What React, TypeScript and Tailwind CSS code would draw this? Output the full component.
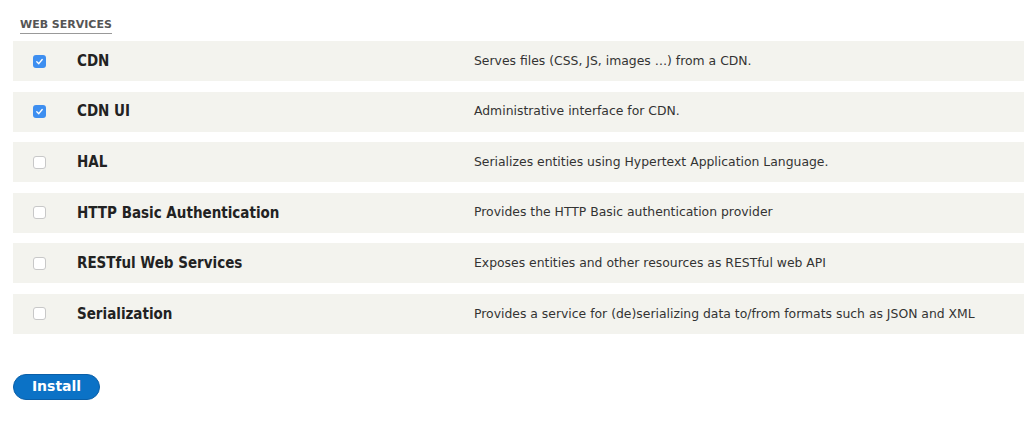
import React from "react";

const rows = [
  { name: "CDN", desc: "Serves files (CSS, JS, images …) from a CDN.", checked: true },
  { name: "CDN UI", desc: "Administrative interface for CDN.", checked: true },
  { name: "HAL", desc: "Serializes entities using Hypertext Application Language.", checked: false },
  { name: "HTTP Basic Authentication", desc: "Provides the HTTP Basic authentication provider", checked: false },
  { name: "RESTful Web Services", desc: "Exposes entities and other resources as RESTful web API", checked: false },
  { name: "Serialization", desc: "Provides a service for (de)serializing data to/from formats such as JSON and XML", checked: false },
];

function Box({ checked }: { checked: boolean }) {
  if (checked) {
    return (
      <div className="w-[13px] h-[13px] rounded-[3px] bg-[#3d8ef0] flex items-center justify-center">
        <svg width="9" height="9" viewBox="0 0 10 10">
          <path d="M2 5.3 L4.2 7.4 L8 2.8" fill="none" stroke="white" strokeWidth="1.5" strokeLinecap="round" strokeLinejoin="round" />
        </svg>
      </div>
    );
  }
  return <div className="w-[13px] h-[13px] rounded-[3px] border border-[#c8c8c8] bg-white" />;
}

export default function App() {
  return (
    <div className="w-[1024px] h-[423px] bg-white overflow-hidden" style={{ fontFamily: '"DejaVu Sans", Verdana, sans-serif' }}>
      <div className="pt-[11px] pl-[20px]">
        <span className="inline-block text-[11px] font-bold text-[#555] leading-[14px] border-b border-[#999] pb-[1px]">WEB SERVICES</span>
      </div>
      <div className="mt-[6px] ml-[13px] flex flex-col gap-[10.6px]">
        {rows.map((r) => (
          <div key={r.name} className="h-[40px] bg-[#f3f3ee] flex items-center">
            <div className="w-[64px] pl-[20px] flex items-center">
              <Box checked={r.checked} />
            </div>
            <div
              className="w-[397px] text-[15px] font-bold text-[#222]"
              style={{ fontFamily: '"DejaVu Sans Condensed", "DejaVu Sans", sans-serif' }}
            >
              {r.name}
            </div>
            <div className="text-[12.4px] text-[#333]">{r.desc}</div>
          </div>
        ))}
      </div>
      <div className="mt-[40px] ml-[13px]">
        <button className="w-[87px] h-[26px] rounded-full bg-[#0b72c6] border border-[#0a5fa8] text-white text-[14px] font-bold flex items-center justify-center">
          Install
        </button>
      </div>
    </div>
  );
}
